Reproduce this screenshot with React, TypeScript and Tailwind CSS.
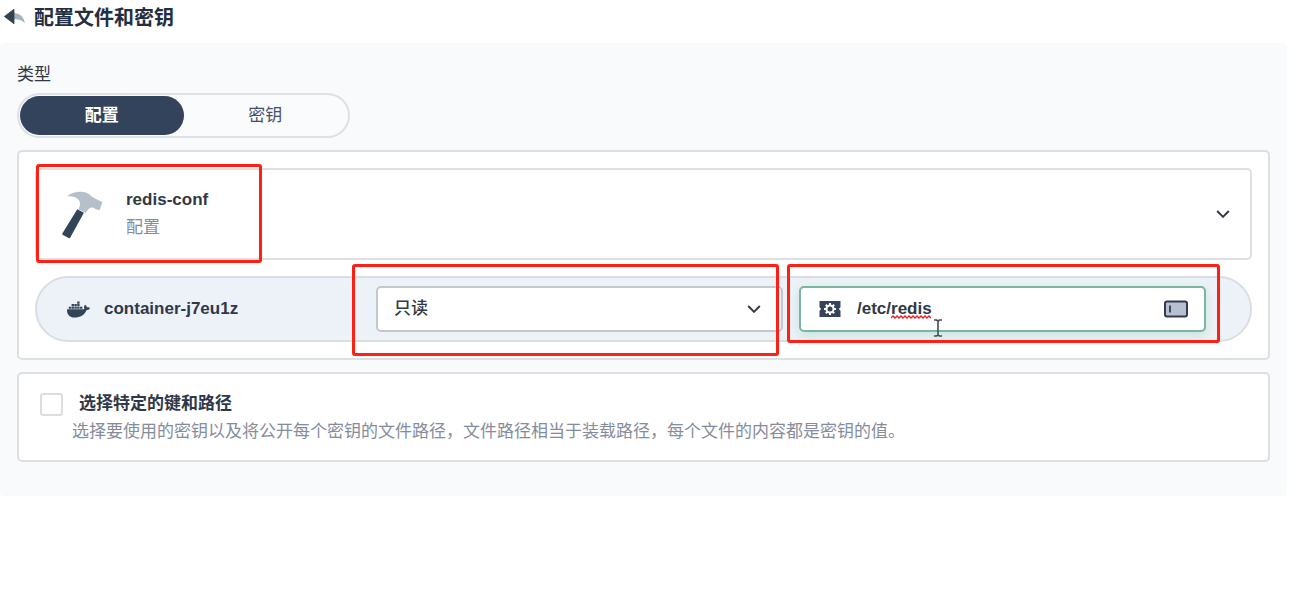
import React from "react";
import { FaDocker } from "react-icons/fa";

function BackIcon() {
  return (
    <svg viewBox="0 0 22 18" className="h-[18px] w-[22px]" aria-hidden="true">
      <path d="M9.500 5c6.300.2 10.500 3.600 11.300 10.500-2.600-3.300-5.800-4.300-11.300-4.200z" fill="#a9b3bf" />
      <path d="M.4 8.500 10 1.200v14.600z" fill="#33424f" stroke="#33424f" strokeWidth=".8" strokeLinejoin="round" />
    </svg>
  );
}

function HammerIcon() {
  return (
    <svg viewBox="0 0 60 65" className="h-[65px] w-[60px]" aria-hidden="true">
      <path
        d="M17 14.200C20.500 11 26 9.500 31 9.700c4 .1 7.600 1.600 9.700 3.800 1.500 1.500 2.600 2.100 4.300 2.900l6.700 3.300c.6.400.7.800.5 1.400l-2.400 6.400c-.3.800-.8 1-1.500.6l-5.100-2.200c-1.300-.6-2.800-.4-4 .6-1.700 1.400-2.700 2.900-3.300 4.600l-7.500-3.900c2.200-3.600 2.100-7.300-.1-9.700-2.500-2.700-6.300-3.600-11.300-3.300z"
        fill="#b6c0cb"
      />
      <path d="m27.300 27.300 6.600 3.500L20.300 55.600c-.4.700-.9.900-1.600.5l-5.800-3.200c-.7-.4-.8-.9-.4-1.600z" fill="#324558" />
    </svg>
  );
}

function Chevron() {
  return (
    <svg viewBox="0 0 14 8" className="h-2 w-3.5 shrink-0" fill="none" aria-hidden="true">
      <path d="m1.200 1 5.800 5.800L12.800 1" stroke="#30353d" strokeWidth="1.900" />
    </svg>
  );
}

function MountIcon() {
  return (
    <svg viewBox="0 0 22 18" className="h-[18px] w-[22px]" aria-hidden="true">
      <path d="M.5 1h21v6.200l-1.700 1.800 1.700 1.800V17H.5v-6.200L2.200 9 .5 7.200z" fill="#36435c" />
      <path d="M11 3v12M5 9h12M6.800 4.800l8.400 8.400M15.200 4.800l-8.400 8.400" stroke="#fff" strokeWidth="2" />
      <circle cx="11" cy="9" r="4.600" fill="#fff" />
      <circle cx="11" cy="9" r="2.500" fill="#36435c" />
    </svg>
  );
}

function FieldIcon() {
  return (
    <svg viewBox="0 0 24 18" className="h-[18px] w-6 shrink-0" aria-hidden="true">
      <rect x="1" y="1.500" width="22" height="15" rx="2" fill="#b6c0cf" stroke="#303a52" strokeWidth="2" />
      <path d="M6 5.500v7" stroke="#303a52" strokeWidth="1.800" />
    </svg>
  );
}

function Squiggle() {
  return (
    <svg viewBox="0 0 40 4" className="pointer-events-none absolute top-[27px] left-[90px] h-1 w-10" fill="none" aria-hidden="true">
      <path
        d="M0 3l2-2 2 2 2-2 2 2 2-2 2 2 2-2 2 2 2-2 2 2 2-2 2 2 2-2 2 2 2-2 2 2 2-2 2 2 2-2 2 2"
        stroke="#e5202b"
        strokeWidth="1.400"
      />
    </svg>
  );
}

function TextCursor() {
  return (
    <svg viewBox="0 0 10 18" className="pointer-events-none absolute top-[31px] left-[132px] h-[18px] w-2.5" fill="none" aria-hidden="true">
      <path d="M1 1h2.500L5 2l1.500-1H9M5 2v14M1 17h2.500L5 16l1.500 1H9" stroke="#454b50" strokeWidth="1.600" />
    </svg>
  );
}

export default function App() {
  return (
    <div
      className="min-h-screen bg-white text-[17px] leading-6 text-[#303848]"
      style={{ fontFamily: '"Liberation Sans", "Noto Sans CJK SC", sans-serif' }}
    >
      <header className="flex h-[43px] items-start gap-2 pt-1 pl-1">
        <button type="button" aria-label="返回" className="mt-1">
          <BackIcon />
        </button>
        <h1 className="text-[20px] leading-7 font-bold text-[#242e42]">配置文件和密钥</h1>
      </header>

      <main className="mr-[26px] rounded-sm bg-[#f9fafc] px-[17px] pt-5 pb-[34px]">
        <h2 className="mb-1.5">类型</h2>
        <div className="mb-3 flex h-[45px] w-[333px] rounded-full border-2 border-[#dde1e6] bg-[#fafbfd] p-px">
          <button type="button" aria-pressed="true" className="flex-1 rounded-full bg-[#33435c] font-bold text-white">
            配置
          </button>
          <button type="button" aria-pressed="false" className="flex-1 rounded-full text-[#485063]">
            密钥
          </button>
        </div>

        <section className="mb-3 rounded-[5px] border-2 border-[#dedfe2] bg-white p-4">
          <button
            type="button"
            className="relative mb-4 flex h-[92px] w-full items-center rounded-[5px] border-2 border-[#dedfe2] bg-white pr-5 pl-[13px] text-left"
          >
            <HammerIcon />
            <span className="ml-4 flex flex-1 flex-col gap-1">
              <span className="font-bold">redis-conf</span>
              <span className="text-[#858d9d]">配置</span>
            </span>
            <Chevron />
            <span className="pointer-events-none absolute -top-1.5 -left-px h-[99px] w-[226px] rounded-[3px] border-3 border-[#ff2015]" />
          </button>

          <div className="grid h-[66px] grid-cols-[293px_minmax(0,1fr)_minmax(0,1fr)] items-center gap-4 rounded-full border-2 border-[#dadee2] bg-[#edf2f9] pr-11 pl-[30px]">
            <div className="flex items-center gap-3.5">
              <FaDocker className="size-[23px] text-[#324558]" aria-hidden="true" />
              <span className="font-bold">container-j7eu1z</span>
            </div>

            <div className="relative flex items-center">
              <select
                aria-label="访问模式"
                className="h-[46px] w-full appearance-none rounded-[5px] border-2 border-[#c3c8cf] bg-white px-4 font-medium outline-none"
              >
                <option>只读</option>
                <option>读写</option>
              </select>
              <span className="pointer-events-none absolute right-[22px] flex">
                <Chevron />
              </span>
              <span className="pointer-events-none absolute -top-[22px] right-1 -left-6 h-[92px] rounded-[3px] border-3 border-[#ff2015]" />
            </div>

            <div className="relative flex h-[46px] items-center rounded-[5px] border-2 border-[#79b69d] bg-white pr-4 pl-[18px] shadow-[0_4px_12px_rgba(85,188,138,0.25)]">
              <MountIcon />
              <input
                aria-label="挂载路径"
                defaultValue="/etc/redis"
                spellCheck={false}
                className="ml-4 min-w-0 flex-1 bg-transparent font-bold outline-none"
              />
              <Squiggle />
              <TextCursor />
              <FieldIcon />
              <span className="pointer-events-none absolute -top-6 -right-4 -left-3.5 h-[79px] rounded-[3px] border-3 border-[#ff2015]" />
            </div>
          </div>
        </section>

        <section className="rounded-[5px] border-2 border-[#dedfe2] bg-white px-[21px] pt-[18px] pb-4">
          <label className="flex items-center gap-4">
            <input type="checkbox" className="size-[23px] appearance-none rounded-[3px] border-2 border-[#dcdde0] bg-white" />
            <span className="font-bold">选择特定的键和路径</span>
          </label>
          <p className="mt-1 pl-8 text-[#858d9d]">
            选择要使用的密钥以及将公开每个密钥的文件路径，文件路径相当于装载路径，每个文件的内容都是密钥的值。
          </p>
        </section>
      </main>
    </div>
  );
}
